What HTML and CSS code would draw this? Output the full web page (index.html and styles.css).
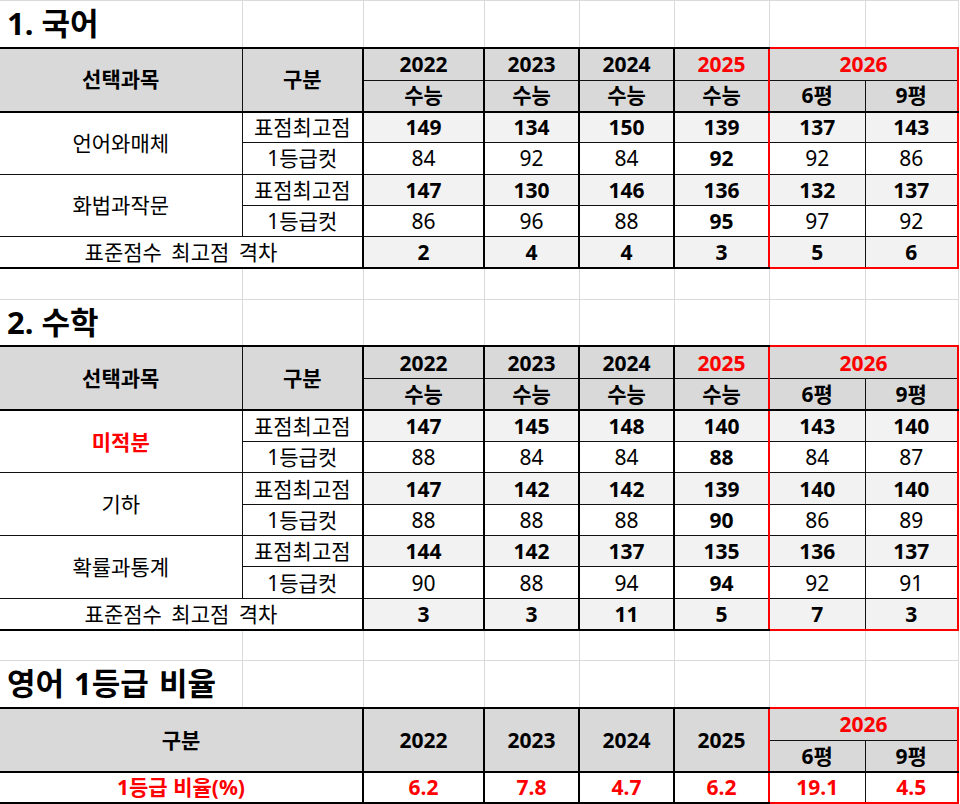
FILE: index.html
```html
<!DOCTYPE html>
<html lang="ko">
<head>
<meta charset="utf-8">
<title>국어 · 수학 · 영어</title>
<link rel="stylesheet" href="styles.css">
</head>
<body>
<table class="sheet">
  <colgroup>
    <col class="w-a"><col class="w-b"><col class="w-y1"><col class="w-y"><col class="w-y"><col class="w-y"><col class="w-p6"><col class="w-p9">
  </colgroup>
  <tbody>
    <!-- 1. 국어 -->
    <tr class="r-title">
      <td class="title">1. 국어</td><td></td><td></td><td></td><td></td><td></td><td></td><td></td>
    </tr>
    <tr class="r-ha">
      <td class="c hd t2 b2" rowspan="2">선택과목</td>
      <td class="c hd t2 b2 k" rowspan="2">구분</td>
      <td class="c hd t2 k">2022</td>
      <td class="c hd t2 k">2023</td>
      <td class="c hd t2 k">2024</td>
      <td class="c hd t2 n red">2025</td>
      <td class="c hd red xt xl xr" colspan="2">2026</td>
    </tr>
    <tr class="r-hb">
      <td class="c hd b2 k">수능</td>
      <td class="c hd b2 k">수능</td>
      <td class="c hd b2 k">수능</td>
      <td class="c hd b2 n">수능</td>
      <td class="c hd b2 xl">6평</td>
      <td class="c hd b2 xr">9평</td>
    </tr>
    <tr class="r-d">
      <td class="c" rowspan="2">언어와매체</td>
      <td class="c k">표점최고점</td>
      <td class="c hl k">149</td><td class="c hl k">134</td><td class="c hl k">150</td><td class="c hl n">139</td><td class="c hl xl">137</td><td class="c hl xr">143</td>
    </tr>
    <tr class="r-d">
      <td class="c k">1등급컷</td>
      <td class="c k">84</td><td class="c k">92</td><td class="c k">84</td><td class="c n bold">92</td><td class="c xl">92</td><td class="c xr">86</td>
    </tr>
    <tr class="r-d">
      <td class="c" rowspan="2">화법과작문</td>
      <td class="c k">표점최고점</td>
      <td class="c hl k">147</td><td class="c hl k">130</td><td class="c hl k">146</td><td class="c hl n">136</td><td class="c hl xl">132</td><td class="c hl xr">137</td>
    </tr>
    <tr class="r-d">
      <td class="c k">1등급컷</td>
      <td class="c k">86</td><td class="c k">96</td><td class="c k">88</td><td class="c n bold">95</td><td class="c xl">97</td><td class="c xr">92</td>
    </tr>
    <tr class="r-d">
      <td class="c b2 k gap-label" colspan="2">표준점수 최고점 격차</td>
      <td class="c hl b2 k">2</td><td class="c hl b2 k">4</td><td class="c hl b2 k">4</td><td class="c hl b2 n">3</td><td class="c hl xl xb">5</td><td class="c hl xr xb">6</td>
    </tr>
    <tr class="r-gap">
      <td></td><td></td><td></td><td></td><td></td><td></td><td></td><td></td>
    </tr>

    <!-- 2. 수학 -->
    <tr class="r-title">
      <td class="title">2. 수학</td><td></td><td></td><td></td><td></td><td></td><td></td><td></td>
    </tr>
    <tr class="r-ha">
      <td class="c hd t2 b2" rowspan="2">선택과목</td>
      <td class="c hd t2 b2 k" rowspan="2">구분</td>
      <td class="c hd t2 k">2022</td>
      <td class="c hd t2 k">2023</td>
      <td class="c hd t2 k">2024</td>
      <td class="c hd t2 n red">2025</td>
      <td class="c hd red xt xl xr" colspan="2">2026</td>
    </tr>
    <tr class="r-hb">
      <td class="c hd b2 k">수능</td>
      <td class="c hd b2 k">수능</td>
      <td class="c hd b2 k">수능</td>
      <td class="c hd b2 n">수능</td>
      <td class="c hd b2 xl">6평</td>
      <td class="c hd b2 xr">9평</td>
    </tr>
    <tr class="r-d">
      <td class="c red bold" rowspan="2">미적분</td>
      <td class="c k">표점최고점</td>
      <td class="c hl k">147</td><td class="c hl k">145</td><td class="c hl k">148</td><td class="c hl n">140</td><td class="c hl xl">143</td><td class="c hl xr">140</td>
    </tr>
    <tr class="r-d">
      <td class="c k">1등급컷</td>
      <td class="c k">88</td><td class="c k">84</td><td class="c k">84</td><td class="c n bold">88</td><td class="c xl">84</td><td class="c xr">87</td>
    </tr>
    <tr class="r-d">
      <td class="c" rowspan="2">기하</td>
      <td class="c k">표점최고점</td>
      <td class="c hl k">147</td><td class="c hl k">142</td><td class="c hl k">142</td><td class="c hl n">139</td><td class="c hl xl">140</td><td class="c hl xr">140</td>
    </tr>
    <tr class="r-d">
      <td class="c k">1등급컷</td>
      <td class="c k">88</td><td class="c k">88</td><td class="c k">88</td><td class="c n bold">90</td><td class="c xl">86</td><td class="c xr">89</td>
    </tr>
    <tr class="r-d">
      <td class="c" rowspan="2">확률과통계</td>
      <td class="c k">표점최고점</td>
      <td class="c hl k">144</td><td class="c hl k">142</td><td class="c hl k">137</td><td class="c hl n">135</td><td class="c hl xl">136</td><td class="c hl xr">137</td>
    </tr>
    <tr class="r-d">
      <td class="c k">1등급컷</td>
      <td class="c k">90</td><td class="c k">88</td><td class="c k">94</td><td class="c n bold">94</td><td class="c xl">92</td><td class="c xr">91</td>
    </tr>
    <tr class="r-d">
      <td class="c b2 k gap-label" colspan="2">표준점수 최고점 격차</td>
      <td class="c hl b2 k">3</td><td class="c hl b2 k">3</td><td class="c hl b2 k">11</td><td class="c hl b2 n">5</td><td class="c hl xl xb">7</td><td class="c hl xr xb">3</td>
    </tr>
    <tr class="r-gap">
      <td></td><td></td><td></td><td></td><td></td><td></td><td></td><td></td>
    </tr>

    <!-- 영어 1등급 비율 -->
    <tr class="r-title">
      <td class="title title-eng">영어 1등급 비율</td><td></td><td></td><td></td><td></td><td></td><td></td><td></td>
    </tr>
    <tr class="r-ha">
      <td class="c hd t2 b2 k" colspan="2" rowspan="2">구분</td>
      <td class="c hd t2 b2 k" rowspan="2">2022</td>
      <td class="c hd t2 b2 k" rowspan="2">2023</td>
      <td class="c hd t2 b2 k" rowspan="2">2024</td>
      <td class="c hd t2 b2 n" rowspan="2">2025</td>
      <td class="c hd red xt xl xr" colspan="2">2026</td>
    </tr>
    <tr class="r-hb">
      <td class="c hd b2 xl">6평</td>
      <td class="c hd b2 xr">9평</td>
    </tr>
    <tr class="r-d">
      <td class="c red bold b2 k" colspan="2">1등급 비율(%)</td>
      <td class="c red bold b2 k">6.2</td><td class="c red bold b2 k">7.8</td><td class="c red bold b2 k">4.7</td><td class="c red bold b2 n">6.2</td><td class="c red bold xl xb">19.1</td><td class="c red bold xr xb">4.5</td>
    </tr>
  </tbody>
</table>
</body>
</html>
```
FILE: styles.css
```css
html, body {
  margin: 0;
  padding: 0;
  background: #ffffff;
}

body {
  font-family: "Noto Sans", "Noto Sans CJK KR", sans-serif;
  color: #000000;
}

.sheet {
  border-collapse: collapse;
  table-layout: fixed;
  width: 958px;
  border-left: hidden;
}

.w-a  { width: 242px; }
.w-b  { width: 121px; }
.w-y1 { width: 121px; }
.w-y  { width: 95px; }
.w-p6 { width: 96px; }
.w-p9 { width: 93px; }

.sheet td {
  border: 1px solid #dadada;
  padding: 0;
  font-size: 21px;
  line-height: 1.15;
  text-align: center;
  vertical-align: middle;
  white-space: nowrap;
  overflow: hidden;
}

.r-title { height: 47px; }
.r-ha    { height: 32.5px; }
.r-hb    { height: 31.5px; }
.r-d     { height: 31.35px; }
.r-gap   { height: 31px; }

.sheet td.title {
  text-align: left;
  padding-left: 7px;
  font-size: 31px;
  font-weight: 700;
}

.sheet td.title-eng { word-spacing: 2px; }

/* content cells: thin dark grid */
.sheet td.c { border: 1px solid #111111; }

/* thick separators */
.sheet td.t2 { border-top: 2px solid #000000; }
.sheet td.b2 { border-bottom: 2px solid #000000; }
.sheet td.k  { border-right: 2px solid #000000; }
.sheet td.n  { border-right: none; }

/* red outline around 2026 */
.sheet td.xt { border-top: 2px solid #ff0000; }
.sheet td.xl { border-left: 2px solid #ff0000; }
.sheet td.xr { border-right: 2px solid #ff0000; }
.sheet td.xb { border-bottom: 2px solid #ff0000; }

.hd {
  background: #d9d9d9;
  font-weight: 700;
}

.hl {
  background: #f2f2f2;
  font-weight: 700;
}

.bold { font-weight: 700; }
.red  { color: #ff0000; }

.gap-label { word-spacing: 4px; }
```
